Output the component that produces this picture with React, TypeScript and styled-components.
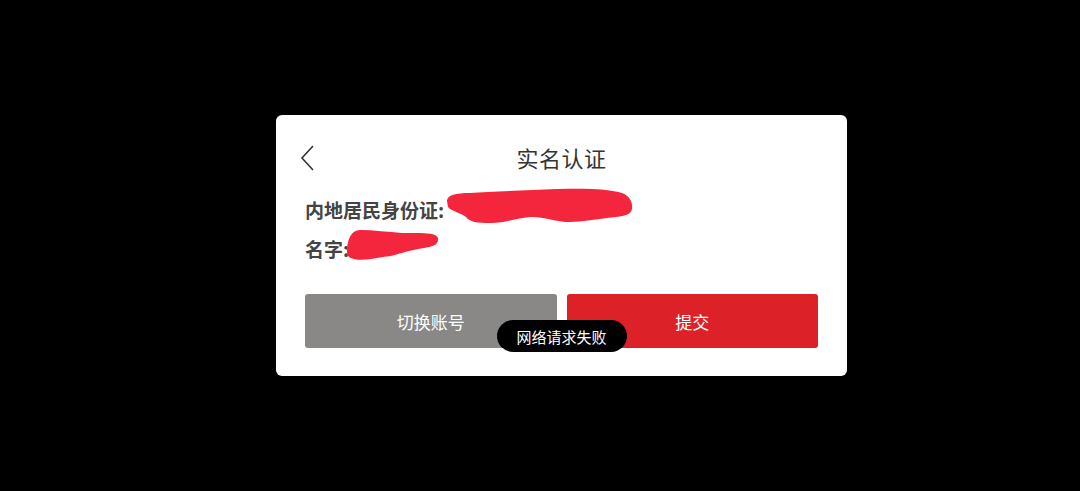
import React from "react";
import styled, { createGlobalStyle } from "styled-components";

const GlobalStyle = createGlobalStyle`
    html, body {
        margin: 0;
        padding: 0;
        background: #000;
    }
    body {
        font-family: "Noto Sans CJK SC", "Noto Sans", sans-serif;
    }
`;

const App: React.FC = () => {
    return (
        <>
            <GlobalStyle />
            <Page>
                <Card>
                    <Header>
                        <BackButton aria-label="back">
                            <svg width="16" height="28" viewBox="0 0 16 28">
                                <polyline points="13,2 2,14 13,26" fill="none" stroke="#333" strokeWidth="1.6" />
                            </svg>
                        </BackButton>
                        <Title>实名认证</Title>
                    </Header>
                    <Info>
                        <Row>内地居民身份证:</Row>
                        <Row>名字:</Row>
                    </Info>
                    <Buttons>
                        <ActionButton $tone="gray">切换账号</ActionButton>
                        <ActionButton $tone="red">提交</ActionButton>
                    </Buttons>
                    <Scribbles width="571" height="261" viewBox="0 0 571 261">
                        {/* redaction marks */}
                        <path
                            fill="#f4263e"
                            d="M171 86 C171 80 180 78 194 78 C215 77 250 75 281 74 C310 73 335 74 346 78 C354 81 357 88 356 94 C355 99 350 101 340 102 C320 104 305 107 294 107 C280 107 265 101 254 102 C240 103 230 108 215 108 C200 108 194 107 190 102 C185 98 175 96 172 92 Z"
                        />
                        <path
                            fill="#f4263e"
                            d="M71 137 C71 125 75 115 84 115 C98 115 112 117 126 118 C145 118 160 117 162 123 C163 130 156 132 148 133 C132 135 120 141 107 142 C95 144 86 146 78 144 C73 143 71 141 71 137 Z"
                        />
                    </Scribbles>
                    <Toast>网络请求失败</Toast>
                </Card>
            </Page>
        </>
    );
};

const Page = styled.div`
    width: 1080px;
    height: 491px;
    display: flex;
    align-items: center;
    padding-left: 276px;
    box-sizing: border-box;
`;

const Card = styled.div`
    position: relative;
    width: 571px;
    height: 261px;
    box-sizing: border-box;
    padding: 25px 29px 28px;
    background: #fff;
    border-radius: 6px;
    display: flex;
    flex-direction: column;
`;

const Header = styled.div`
    position: relative;
    height: 34px;
    display: flex;
    align-items: center;
    justify-content: center;
    margin-bottom: 16px;
`;

const BackButton = styled.div`
    position: absolute;
    left: -5px;
    top: 4px;
    display: flex;
`;

const Title = styled.div`
    font-size: 22px;
    color: #333;
    letter-spacing: 0.5px;
`;

const Info = styled.div`
    display: flex;
    flex-direction: column;
`;

const Row = styled.div`
    height: 39px;
    line-height: 39px;
    font-size: 19px;
    font-weight: bold;
    color: #444;
`;

const Buttons = styled.div`
    display: flex;
    gap: 10px;
    margin-top: 26px;
`;

const ActionButton = styled.div<{ $tone: "gray" | "red" }>`
    flex: 1;
    height: 54px;
    border-radius: 3px;
    display: flex;
    align-items: center;
    justify-content: center;
    font-size: 17px;
    color: #fff;
    background: ${(p) => (p.$tone === "red" ? "#dc2128" : "#898886")};
`;

const Scribbles = styled.svg`
    position: absolute;
    left: 0;
    top: 0;
    pointer-events: none;
`;

const Toast = styled.div`
    position: absolute;
    left: 50%;
    top: 205px;
    transform: translateX(-50%);
    height: 32px;
    padding: 0 20px;
    border-radius: 16px;
    background: #000;
    color: #fff;
    font-size: 15px;
    display: flex;
    align-items: center;
    white-space: nowrap;
`;

export default App;
